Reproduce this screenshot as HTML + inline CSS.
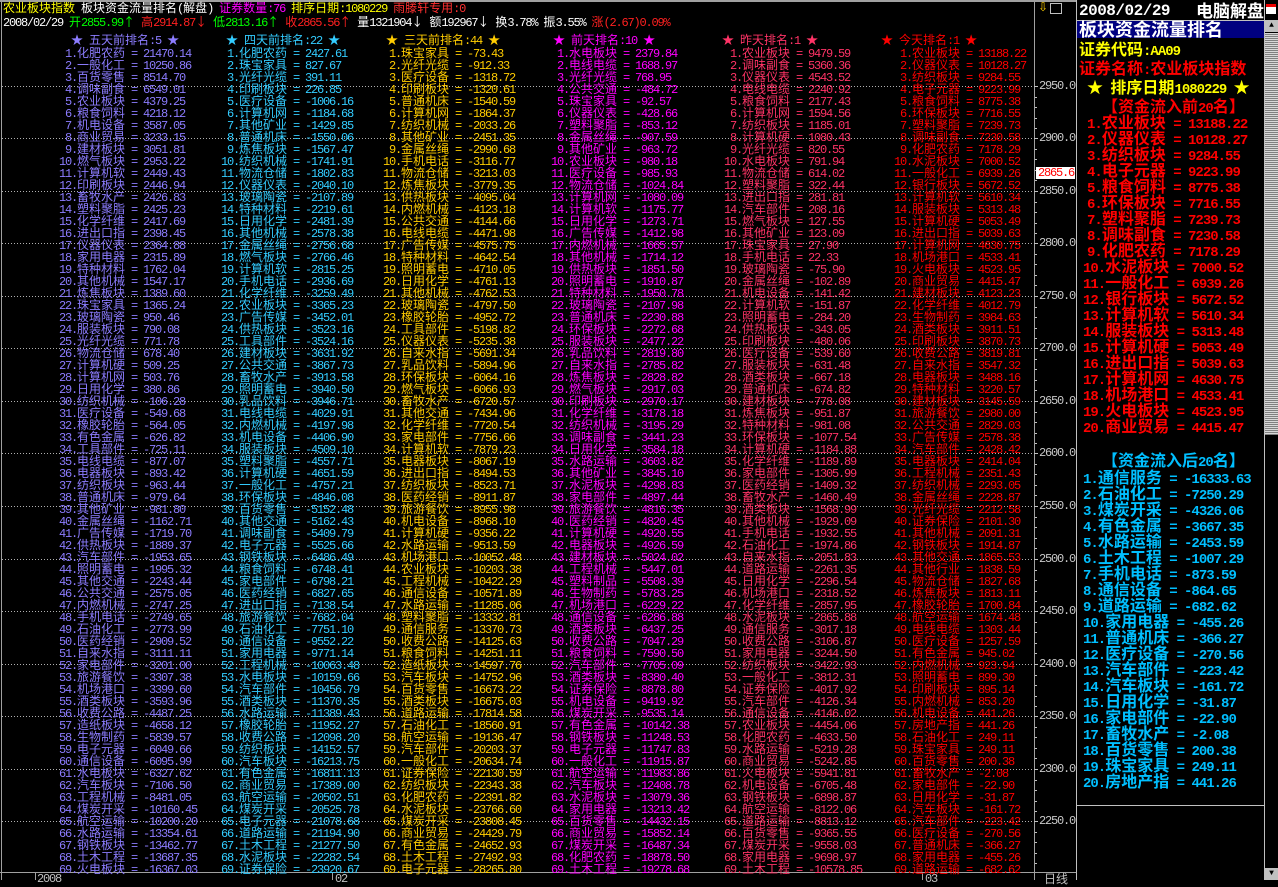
<!DOCTYPE html>
<html><head><meta charset="utf-8">
<style>
body{margin:0;background:#000;width:1278px;height:880px;overflow:hidden;position:relative;font-family:"Liberation Mono",monospace}
.a{position:absolute;white-space:pre;line-height:12px;font-size:12px;letter-spacing:-1.2px}
.a .c{letter-spacing:0}
.c{font-family:"WenQuanYi Zen Hei","Noto Sans CJK SC",sans-serif;font-size:12px}
.r{position:absolute;white-space:pre;line-height:18px;font-size:14px;font-weight:bold;letter-spacing:-1px}
.r .c{font-size:16px;font-weight:bold;letter-spacing:0}
.dl{position:absolute;left:2px;width:1032px;height:1px;background:repeating-linear-gradient(90deg,#b0b0b0 0 1px,transparent 1px 3px)}
.lb{position:absolute;left:1035px;font-size:12px;letter-spacing:-1.2px;line-height:12px;color:#c8c8c8;white-space:pre}
.tk{position:absolute;left:1035px;width:2px;height:1px;background:#c0c0c0}
.ln{position:absolute;background:#a0a0a0}
</style></head><body>
<div class="ln" style="left:0;top:0;width:1076px;height:2px"></div>
<div class="ln" style="left:1px;top:0;width:1px;height:880px"></div>
<div class="ln" style="left:1034px;top:2px;width:1px;height:878px"></div>
<div class="ln" style="left:1076px;top:0;width:1px;height:880px;background:#c0c0c0"></div>
<div class="ln" style="left:1264px;top:0;width:1px;height:880px;background:#c0c0c0"></div>
<div class="ln" style="left:0;top:872px;width:1076px;height:1px"></div>
<div class="ln" style="left:35px;top:872px;width:1px;height:8px"></div>
<div class="ln" style="left:332px;top:872px;width:1px;height:8px"></div>
<div class="ln" style="left:922px;top:872px;width:1px;height:8px"></div>
<div class="ln" style="left:1077px;top:805px;width:187px;height:1px;background:#c0c0c0"></div>
<div class="ln" style="left:1077px;top:20px;width:187px;height:1px;background:#c0c0c0"></div>
<div style="position:absolute;left:1265px;top:20px;width:13px;height:12px;background:#c0c0c0;color:#000;font-size:8px;line-height:12px;text-align:center">▲</div>
<div style="position:absolute;left:1265px;top:33px;width:13px;height:402px;background:repeating-linear-gradient(180deg,#d8d8d8 0 1px,#808080 1px 2px)"></div>
<div style="position:absolute;left:1265px;top:868px;width:13px;height:12px;background:#c0c0c0;color:#000;font-size:8px;line-height:12px;text-align:center">▼</div>
<div style="position:absolute;left:1266px;top:4px;width:10px;height:10px;background:#fff;border-top:3px solid #e00;box-sizing:border-box"></div>
<div style="position:absolute;left:1038px;top:2px;color:#ffd000;font-size:12px;line-height:12px">⇩</div>
<div style="position:absolute;left:1050px;top:3px;width:10px;height:9px;border:1px solid #c0c0c0"></div>
<div id="root"></div>
<script>
function w(s){return s.replace(/([^\x00-\x7f]+)/g,'<span class="c">$1</span>')}
var R=document.getElementById('root'),H='';
function put(x,y,col,s,cls){H+='<div class="'+(cls||'a')+'" style="left:'+x+'px;top:'+y+'px;color:'+col+'">'+w(s)+'</div>';}
var t1=[["农业板块指数","#ffff00"],[" 板块资金流量排名(解盘) ","#ffffff"],["证券数量:76 ","#ff00ff"],["排序日期:1080229 ","#ffff00"],["雨滕轩专用:0","#ff3030"]];
H+='<div class="a" style="left:3px;top:2px">';t1.forEach(function(p){H+='<span style="color:'+p[1]+'">'+w(p[0])+'</span>'});H+='</div>';
var t2=[["2008/02/29 ","#fff"],["开2855.99↑ ","#00ff00"],["高2914.87↓ ","#ff2020"],["低2813.16↑ ","#00ff00"],["收2865.56↑ ","#ff2020"],["量1321904↓ ","#fff"],["额192967↓ ","#fff"],["换3.78% ","#fff"],["振3.55% ","#fff"],["涨(2.67)0.09%","#ff2020"]];
H+='<div class="a" style="left:3px;top:16px">';t2.forEach(function(p){H+='<span style="color:'+p[1]+'">'+w(p[0])+'</span>'});H+='</div>';
var lv=[[2950,86],[2900,138],[2850,191],[2800,243],[2750,296],[2700,348],[2650,401],[2600,453],[2550,506],[2500,559],[2450,611],[2400,664],[2350,716],[2300,769],[2250,821]];
lv.forEach(function(l){H+='<div class="dl" style="top:'+l[1]+'px"></div><div class="ln" style="left:1034px;top:'+l[1]+'px;width:4px;height:1px;background:#c0c0c0"></div><div class="lb" style="top:'+(l[1]-6)+'px;left:1039px">'+l[0]+'.0</div>';
 for(var k=1;k<5;k++)H+='<div class="tk" style="top:'+(l[1]+k*10.5)+'px"></div>';});
H+='<div style="position:absolute;left:1036px;top:167px;width:39px;height:12px;background:#fff;color:#f00;font-size:12px;letter-spacing:-1.2px;line-height:12px;text-align:right;padding-right:1px;box-sizing:border-box">2865.6</div>';
H+='<div class="a" style="left:37px;top:873px;color:#c0c0c0">2008</div><div class="a" style="left:335px;top:873px;color:#c0c0c0">02</div><div class="a" style="left:925px;top:873px;color:#c0c0c0">03</div><div class="a" style="left:1044px;top:873px;color:#c0c0c0">'+w('日线')+'</div>';
var cols=[
["#8c7cff",59,71,"★ 五天前排名:5 ★","化肥农药 21470.14,一般化工 10250.86,百货零售 8514.70,调味副食 6549.01,农业板块 4379.25,粮食饲料 4218.12,机电设备 3587.05,商业贸易 3233.15,建材板块 3051.81,燃气板块 2953.22,计算机软 2449.43,印刷板块 2446.94,畜牧水产 2426.83,塑料聚脂 2425.23,化学纤维 2417.69,进出口指 2398.45,仪器仪表 2364.88,家用电器 2315.89,特种材料 1762.04,其他机械 1547.17,炼焦板块 1389.60,珠宝家具 1365.24,玻璃陶瓷 950.46,服装板块 790.08,光纤光缆 771.78,物流仓储 678.40,计算机硬 509.25,计算机网 503.76,日用化学 380.86,纺织机械 -106.28,医疗设备 -549.68,橡胶轮胎 -564.05,有色金属 -626.82,工具部件 -725.11,电线电缆 -877.07,电器板块 -893.42,纺织板块 -963.44,普通机床 -979.64,其他矿业 -981.80,金属丝绳 -1162.71,广告传媒 -1719.70,供热板块 -1889.37,汽车部件 -1953.65,照明蓄电 -1995.32,其他交通 -2243.44,公共交通 -2575.05,内燃机械 -2747.25,手机电话 -2749.65,石油化工 -2773.99,医药经销 -2909.52,自来水指 -3111.11,家电部件 -3201.00,旅游餐饮 -3307.38,机场港口 -3399.60,酒类板块 -3593.96,收费公路 -4487.25,造纸板块 -4658.12,生物制药 -5839.57,电子元器 -6049.66,通信设备 -6095.99,水电板块 -6327.62,汽车板块 -7106.50,工程机械 -8481.05,煤炭开采 -10160.45,航空运输 -10200.20,水路运输 -13354.61,钢铁板块 -13462.77,土木工程 -13687.35,火电板块 -16367.03"],
["#33ccff",221,226,"★ 四天前排名:22 ★","化肥农药 2427.61,珠宝家具 827.67,光纤光缆 391.11,印刷板块 226.85,医疗设备 -1006.16,计算机网 -1184.68,其他矿业 -1429.85,普通机床 -1550.06,炼焦板块 -1567.47,纺织机械 -1741.91,物流仓储 -1802.83,仪器仪表 -2040.10,玻璃陶瓷 -2107.89,特种材料 -2219.61,日用化学 -2481.39,其他机械 -2578.38,金属丝绳 -2756.68,燃气板块 -2766.46,计算机软 -2815.25,手机电话 -2936.69,化学纤维 -3259.49,农业板块 -3365.23,广告传媒 -3452.01,供热板块 -3523.16,工具部件 -3524.16,建材板块 -3631.92,公共交通 -3867.73,畜牧水产 -3913.58,照明蓄电 -3940.50,乳品饮料 -3946.71,电线电缆 -4029.91,内燃机械 -4197.98,机电设备 -4406.90,服装板块 -4509.10,塑料聚脂 -4557.71,计算机硬 -4651.59,一般化工 -4757.21,环保板块 -4846.08,百货零售 -5152.48,其他交通 -5162.43,调味副食 -5409.79,电子元器 -5525.66,钢铁板块 -6486.49,粮食饲料 -6748.41,家电部件 -6798.21,医药经销 -6827.65,进出口指 -7138.54,旅游餐饮 -7682.04,石油化工 -7751.10,通信设备 -9552.22,家用电器 -9771.14,工程机械 -10063.48,水电板块 -10159.66,汽车部件 -10456.79,酒类板块 -11370.35,水路运输 -11389.43,橡胶轮胎 -11952.27,收费公路 -12098.20,纺织板块 -14152.57,汽车板块 -16213.75,有色金属 -16811.13,商业贸易 -17389.00,航空运输 -20502.51,煤炭开采 -20525.78,电子元器 -21078.68,道路运输 -21194.90,土木工程 -21277.50,水泥板块 -22282.54,证券保险 -23920.67"],
["#ffcc00",383,386,"★ 三天前排名:44 ★","珠宝家具 -73.43,光纤光缆 -912.33,医疗设备 -1318.72,印刷板块 -1320.61,普通机床 -1540.59,计算机网 -1864.37,纺织机械 -2033.26,其他矿业 -2451.35,金属丝绳 -2990.68,手机电话 -3116.77,物流仓储 -3213.03,炼焦板块 -3779.35,供热板块 -4095.04,内燃机械 -4123.18,公共交通 -4144.66,电线电缆 -4471.98,广告传媒 -4575.75,特种材料 -4642.54,照明蓄电 -4710.05,日用化学 -4761.13,其他机械 -4762.53,玻璃陶瓷 -4797.50,橡胶轮胎 -4952.72,工具部件 -5198.82,仪器仪表 -5235.38,自来水指 -5691.34,乳品饮料 -5894.96,环保板块 -6064.16,燃气板块 -6066.93,畜牧水产 -6720.57,其他交通 -7434.96,化学纤维 -7720.54,家电部件 -7756.66,计算机软 -7879.23,电器板块 -8067.19,进出口指 -8494.53,纺织板块 -8523.71,医药经销 -8911.87,旅游餐饮 -8955.98,机电设备 -8968.10,计算机硬 -9356.22,水路运输 -9513.59,机场港口 -10052.48,农业板块 -10203.38,工程机械 -10422.29,通信设备 -10571.89,水路运输 -11285.06,塑料聚脂 -13332.81,通信服务 -13370.73,收费公路 -14125.63,粮食饲料 -14251.11,造纸板块 -14597.76,汽车板块 -14752.96,百货零售 -16673.22,酒类板块 -16675.03,道路运输 -17814.58,石油化工 -18560.91,航空运输 -19136.47,汽车部件 -20203.37,一般化工 -20634.74,证券保险 -22130.59,纺织板块 -22343.38,化肥农药 -22391.82,水泥板块 -23766.60,煤炭开采 -23808.45,商业贸易 -24429.79,有色金属 -24652.93,土木工程 -27492.93,电子元器 -28265.80"],
["#ff00ff",551,553,"★ 前天排名:10 ★","水电板块 2379.84,电线电缆 1688.97,光纤光缆 768.95,公共交通 -484.72,珠宝家具 -92.57,仪器仪表 -428.66,塑料聚脂 -853.12,金属丝绳 -907.59,其他矿业 -963.72,农业板块 -980.18,医疗设备 -985.93,物流仓储 -1024.84,计算机网 -1080.09,计算机软 -1175.77,日用化学 -1273.71,广告传媒 -1412.98,内燃机械 -1665.57,其他机械 -1714.12,供热板块 -1851.50,照明蓄电 -1910.87,特种材料 -1950.78,玻璃陶瓷 -2107.98,普通机床 -2230.88,环保板块 -2272.68,服装板块 -2477.22,乳品饮料 -2819.80,自来水指 -2785.82,炼焦板块 -2828.82,燃气板块 -2917.03,印刷板块 -2970.17,化学纤维 -3178.18,纺织机械 -3195.29,调味副食 -3441.23,日用化学 -3584.18,水路运输 -3603.82,其他矿业 -3845.10,水泥板块 -4298.83,家电部件 -4897.44,旅游餐饮 -4816.35,医药经销 -4820.45,计算机硬 -4920.55,电器板块 -4926.59,建材板块 -5024.02,工程机械 -5447.01,塑料制品 -5508.39,生物制药 -5783.25,机场港口 -6229.22,通信设备 -6286.88,酒类板块 -6437.25,收费公路 -7047.29,粮食饲料 -7590.50,汽车部件 -7705.09,酒类板块 -8380.40,证券保险 -8878.80,机电设备 -9419.92,煤炭开采 -9535.14,有色金属 -10142.38,钢铁板块 -11248.53,电子元器 -11747.83,一般化工 -11915.87,航空运输 -11983.86,汽车板块 -12408.78,水泥板块 -13079.36,家用电器 -13213.42,百货零售 -14432.15,商业贸易 -15852.14,煤炭开采 -16487.34,化肥农药 -18878.50,土木工程 -19278.68"],
["#ff3366",724,722,"★ 昨天排名:1 ★","农业板块 9479.59,调味副食 5360.36,仪器仪表 4543.52,电线电缆 2240.92,粮食饲料 2177.43,计算机网 1594.56,纺织板块 1185.01,计算机硬 1080.43,光纤光缆 820.55,水电板块 791.94,物流仓储 614.02,塑料聚脂 322.44,进出口指 281.81,汽车部件 208.16,燃气板块 127.55,其他矿业 123.09,珠宝家具 27.90,手机电话 22.33,玻璃陶瓷 -75.90,金属丝绳 -102.89,机电设备 -141.42,计算机软 -151.87,照明蓄电 -284.20,供热板块 -343.05,印刷板块 -480.06,医疗设备 -539.60,服装板块 -631.48,酒类板块 -667.18,普通机床 -674.82,建材板块 -778.08,炼焦板块 -951.87,特种材料 -981.08,环保板块 -1077.54,计算机硬 -1184.88,化学纤维 -1189.89,家电部件 -1305.99,医药经销 -1409.32,畜牧水产 -1460.49,酒类板块 -1568.99,其他机械 -1929.09,手机电话 -1932.55,石油化工 -1974.86,自来水指 -2051.83,道路运输 -2261.35,日用化学 -2296.54,机场港口 -2318.52,化学纤维 -2857.95,水泥板块 -2865.88,通信服务 -3017.18,收费公路 -3106.87,家用电器 -3244.50,纺织板块 -3422.93,一般化工 -3812.31,证券保险 -4017.92,汽车部件 -4126.34,通信设备 -4146.02,农业板块 -4454.06,化肥农药 -4633.50,水路运输 -5219.28,商业贸易 -5242.85,火电板块 -5941.81,机电设备 -6705.48,钢铁板块 -6898.87,航空运输 -8122.06,道路运输 -8813.12,百货零售 -9365.55,煤炭开采 -9558.03,家用电器 -9698.97,土木工程 -10578.85"],
["#ff0000",894,881,"★ 今天排名:1 ★","农业板块 13188.22,仪器仪表 10128.27,纺织板块 9284.55,电子元器 9223.99,粮食饲料 8775.38,环保板块 7716.55,塑料聚脂 7239.73,调味副食 7230.58,化肥农药 7178.29,水泥板块 7000.52,一般化工 6939.26,银行板块 5672.52,计算机软 5610.34,服装板块 5313.48,计算机硬 5053.49,进出口指 5039.63,计算机网 4630.75,机场港口 4533.41,火电板块 4523.95,商业贸易 4415.47,建材板块 4123.23,化学纤维 4012.79,生物制药 3984.63,酒类板块 3911.51,印刷板块 3870.73,收费公路 3819.81,自来水指 3547.32,电器板块 3488.16,特种材料 3220.57,建材板块 3145.59,旅游餐饮 2980.00,公共交通 2829.03,广告传媒 2578.38,汽车部件 2428.42,电器板块 2414.04,工程机械 2351.43,纺织机械 2293.05,金属丝绳 2228.87,光纤光缆 2212.58,证券保险 2101.30,其他机械 2091.31,钢铁板块 1914.87,其他交通 1865.53,其他行业 1838.59,物流仓储 1827.68,炼焦板块 1813.11,橡胶轮胎 1700.84,航空运输 1674.48,电线电缆 1303.44,医疗设备 1257.59,有色金属 945.02,内燃机械 923.94,照明蓄电 899.30,印刷板块 895.14,内燃机械 853.20,机电设备 441.26,房地产指 441.26,石油化工 249.11,珠宝家具 249.11,百货零售 200.38,畜牧水产 -2.08,家电部件 -22.90,日用化学 -31.87,汽车板块 -161.72,汽车部件 -223.42,医疗设备 -270.56,普通机床 -366.27,家用电器 -455.26,道路运输 -682.62"]];
cols.forEach(function(c){
 put(c[2],34,c[0],c[3]);
 c[4].split(',').forEach(function(it,i){var p=it.split(' ');var n=i+1;put(c[1],47+12*i,c[0],(n<10?' ':'')+n+'.'+p[0]+' = '+p[1]);});
});
H+='<div class="r" style="left:1079px;top:2px;color:#fff;font-size:16px;letter-spacing:-0.5px">2008/02/29</div>';
H+='<div class="r" style="left:1196px;top:1px;color:#fff"><span class="c" style="font-size:17px">电脑解盘</span></div>';
H+='<div style="position:absolute;left:1077px;top:21px;width:187px;height:17px;background:#000080"></div>';
H+='<div class="r" style="left:1079px;top:20px;color:#fff"><span class="c" style="font-size:18px">板块资金流量排名</span></div>';
put(1079,39,'#ffff00','证券代码:AA09','r');
put(1079,58,'#ff0000','证券名称:农业板块指数','r');
put(1087,77,'#ffff00','★ 排序日期1080229 ★','r');
put(1102,96,'#ff0000','【资金流入前20名】','r');
var top20="农业板块 13188.22,仪器仪表 10128.27,纺织板块 9284.55,电子元器 9223.99,粮食饲料 8775.38,环保板块 7716.55,塑料聚脂 7239.73,调味副食 7230.58,化肥农药 7178.29,水泥板块 7000.52,一般化工 6939.26,银行板块 5672.52,计算机软 5610.34,服装板块 5313.48,计算机硬 5053.49,进出口指 5039.63,计算机网 4630.75,机场港口 4533.41,火电板块 4523.95,商业贸易 4415.47".split(',');
top20.forEach(function(it,i){var p=it.split(' ');put(i<9?1087:1083,112+16*i,'#ff0000',(i+1)+'.'+p[0]+' = '+p[1],'r');});
put(1102,450,'#00bfff','【资金流入后20名】','r');
var bot20="通信服务 -16333.63,石油化工 -7250.29,煤炭开采 -4326.06,有色金属 -3667.35,水路运输 -2453.59,土木工程 -1007.29,手机电话 -873.59,通信设备 -864.65,道路运输 -682.62,家用电器 -455.26,普通机床 -366.27,医疗设备 -270.56,汽车部件 -223.42,汽车板块 -161.72,日用化学 -31.87,家电部件 -22.90,畜牧水产 -2.08,百货零售 200.38,珠宝家具 249.11,房地产指 441.26".split(',');
bot20.forEach(function(it,i){var p=it.split(' ');put(1083,467+16*i,'#00bfff',(i+1)+'.'+p[0]+' = '+p[1],'r');});
R.innerHTML=H;
</script>
</body></html>
